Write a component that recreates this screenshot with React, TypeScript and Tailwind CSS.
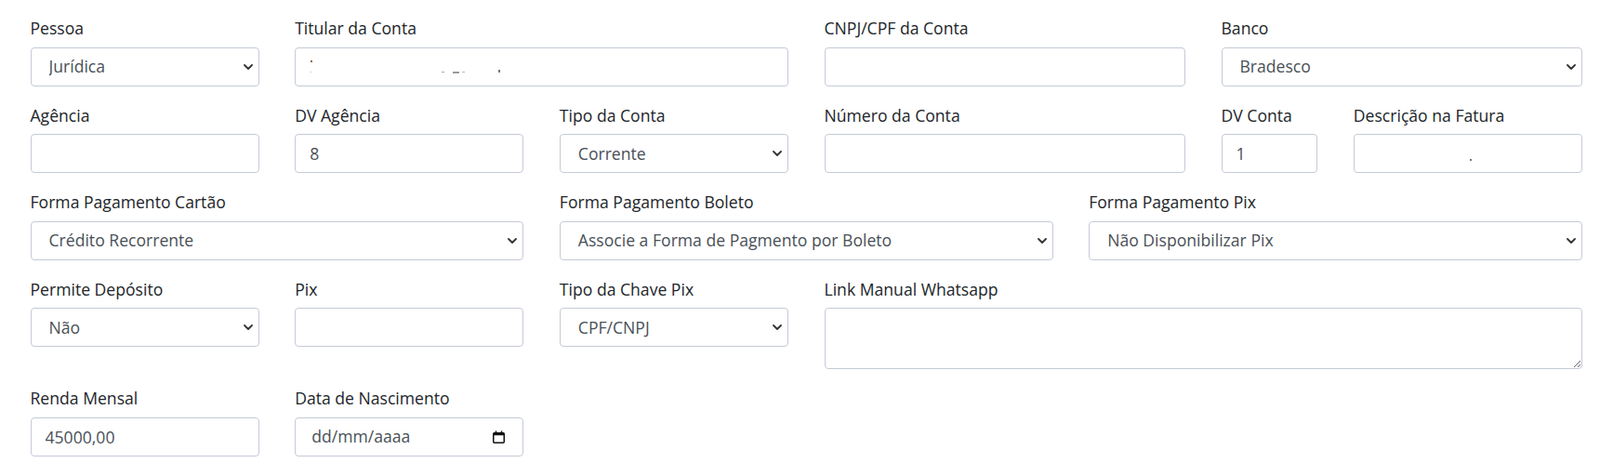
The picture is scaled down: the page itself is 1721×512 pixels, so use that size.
import React from "react";

const inputCls =
  "block w-full h-[42px] rounded-[4px] border border-[#c4cad7] bg-white px-[15px] text-[17.6px] text-[#495057] outline-none";

const Chevron = () => (
  <svg
    className="pointer-events-none absolute right-[7px] top-1/2 -translate-y-1/2"
    width="10"
    height="6"
    viewBox="0 0 10 6"
    fill="none"
  >
    <path d="M1 1l4 4 4-4" stroke="#333" strokeWidth="1.8" strokeLinecap="round" strokeLinejoin="round" />
  </svg>
);

const Field = ({ label, span, children }: { label: string; span: string; children: React.ReactNode }) => (
  <div className={`${span} mb-[19px]`}>
    <label className="block mb-[7px] text-[17.6px] leading-[25.5px] text-[#212529]">{label}</label>
    {children}
  </div>
);

const Select = ({ value }: { value: string }) => (
  <div className="relative">
    <select defaultValue={value} className={`${inputCls} appearance-none pl-[19px] pr-8`}>
      <option>{value}</option>
    </select>
    <Chevron />
  </div>
);

const Input = ({ value = "" }: { value?: string }) => (
  <input type="text" defaultValue={value} className={inputCls} />
);

const App = () => {
  return (
    <div className="min-h-screen bg-white font-['Open_Sans',sans-serif]">
      <div className="grid grid-cols-12 gap-x-[38.5px] pl-[32.5px] pr-[19px] pt-[18px]">
        {/* linha 1 */}
        <Field label="Pessoa" span="col-span-2">
          <Select value="Jurídica" />
        </Field>
        <Field label="Titular da Conta" span="col-span-4">
          <div className="relative">
            <Input />
            {/* restos do texto apagado */}
            <span className="absolute left-[17px] top-[14px] h-[2px] w-[2px] bg-[#8a6a55]" />
            <span className="absolute left-[17px] top-[26px] h-px w-px bg-[#bbb]" />
            <span className="absolute left-[158px] top-[26px] h-px w-[3px] bg-[#aab]" />
            <span className="absolute left-[170px] top-[26px] h-[2px] w-[7px] bg-[#999]" />
            <span className="absolute left-[180px] top-[26px] h-px w-[3px] bg-[#bbb]" />
            <span className="absolute left-[219px] top-[24px] h-[3px] w-[2px] bg-[#777]" />
          </div>
        </Field>
        <Field label="CNPJ/CPF da Conta" span="col-span-3">
          <Input />
        </Field>
        <Field label="Banco" span="col-span-3">
          <Select value="Bradesco" />
        </Field>

        {/* linha 2 */}
        <Field label="Agência" span="col-span-2">
          <Input />
        </Field>
        <Field label="DV Agência" span="col-span-2">
          <Input value="8" />
        </Field>
        <Field label="Tipo da Conta" span="col-span-2">
          <Select value="Corrente" />
        </Field>
        <Field label="Número da Conta" span="col-span-3">
          <Input />
        </Field>
        <Field label="DV Conta" span="col-span-1">
          <Input value="1" />
        </Field>
        <Field label="Descrição na Fatura" span="col-span-2">
          <div className="relative">
            <Input />
            <span className="absolute left-[125px] top-[27px] h-[2px] w-[2px] bg-[#777]" />
          </div>
        </Field>

        {/* linha 3 */}
        <Field label="Forma Pagamento Cartão" span="col-span-4">
          <Select value="Crédito Recorrente" />
        </Field>
        <Field label="Forma Pagamento Boleto" span="col-span-4">
          <Select value="Associe a Forma de Pagmento por Boleto" />
        </Field>
        <Field label="Forma Pagamento Pix" span="col-span-4">
          <Select value="Não Disponibilizar Pix" />
        </Field>

        {/* linha 4 */}
        <Field label="Permite Depósito" span="col-span-2">
          <Select value="Não" />
        </Field>
        <Field label="Pix" span="col-span-2">
          <Input />
        </Field>
        <Field label="Tipo da Chave Pix" span="col-span-2">
          <Select value="CPF/CNPJ" />
        </Field>
        <Field label="Link Manual Whatsapp" span="col-span-6">
          <textarea className="block w-full h-[66px] rounded-[4px] border border-[#c4cad7] bg-white px-[15px] py-[6px] text-[17.6px] text-[#495057] outline-none" />
        </Field>

        {/* linha 5 */}
        <Field label="Renda Mensal" span="col-span-2">
          <Input value="45000,00" />
        </Field>
        <Field label="Data de Nascimento" span="col-span-2">
          <div className={`${inputCls} flex items-center justify-between pl-[17px] pr-[19px]`}>
            <span>dd/mm/aaaa</span>
            <svg width="13" height="14" viewBox="0 0 13 14" fill="none">
              <rect x="0.75" y="2.75" width="11.5" height="10.5" rx="1" stroke="#111" strokeWidth="1.5" />
              <rect x="0.75" y="2.75" width="11.5" height="2.5" fill="#111" />
              <path d="M3.5 0.5v2.5M9.5 0.5v2.5" stroke="#111" strokeWidth="1.5" />
            </svg>
          </div>
        </Field>
      </div>
    </div>
  );
};

export default App;
